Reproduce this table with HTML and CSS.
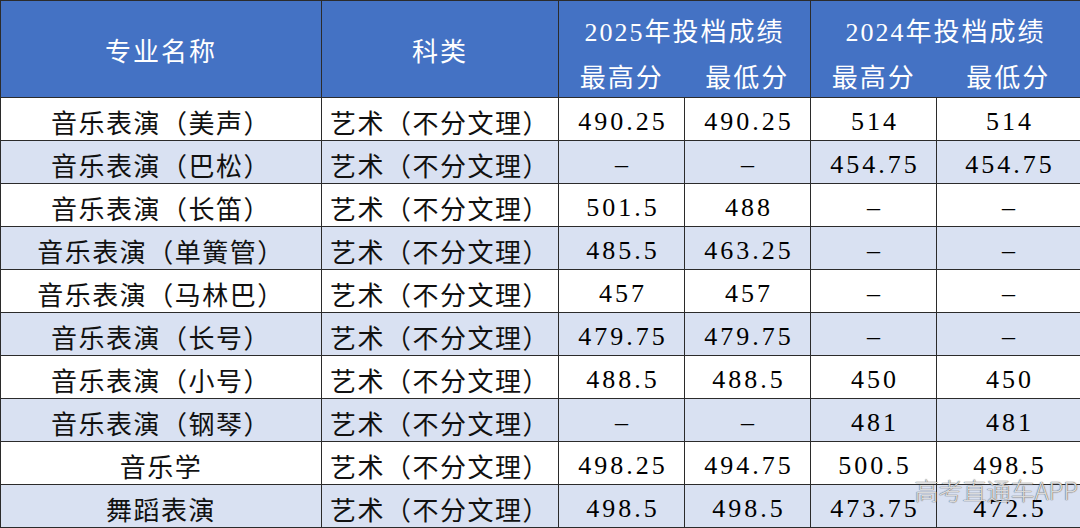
FILE: index.html
```html
<!DOCTYPE html>
<html lang="zh">
<head>
<meta charset="utf-8">
<link rel="stylesheet" href="styles.css">
</head>
<body>
<div class="wrap">
<table class="score">
  <colgroup>
    <col class="c-name"><col class="c-kind"><col class="c-num"><col class="c-num"><col class="c-num"><col class="c-last">
  </colgroup>
  <thead>
    <tr class="h1">
      <th rowspan="2">专业名称</th>
      <th rowspan="2">科类</th>
      <th colspan="2" class="grp">2025年投档成绩</th>
      <th colspan="2" class="grp">2024年投档成绩</th>
    </tr>
    <tr class="h2">
      <th class="sub">最高分</th>
      <th class="sub nol">最低分</th>
      <th class="sub">最高分</th>
      <th class="sub nol">最低分</th>
    </tr>
  </thead>
  <tbody>
    <tr><td>音乐表演（美声）</td><td>艺术（不分文理）</td><td class="n">490.25</td><td class="n">490.25</td><td class="n">514</td><td class="n">514</td></tr>
    <tr class="alt"><td>音乐表演（巴松）</td><td>艺术（不分文理）</td><td class="n">–</td><td class="n">–</td><td class="n">454.75</td><td class="n">454.75</td></tr>
    <tr><td>音乐表演（长笛）</td><td>艺术（不分文理）</td><td class="n">501.5</td><td class="n">488</td><td class="n">–</td><td class="n">–</td></tr>
    <tr class="alt"><td>音乐表演（单簧管）</td><td>艺术（不分文理）</td><td class="n">485.5</td><td class="n">463.25</td><td class="n">–</td><td class="n">–</td></tr>
    <tr><td>音乐表演（马林巴）</td><td>艺术（不分文理）</td><td class="n">457</td><td class="n">457</td><td class="n">–</td><td class="n">–</td></tr>
    <tr class="alt"><td>音乐表演（长号）</td><td>艺术（不分文理）</td><td class="n">479.75</td><td class="n">479.75</td><td class="n">–</td><td class="n">–</td></tr>
    <tr><td>音乐表演（小号）</td><td>艺术（不分文理）</td><td class="n">488.5</td><td class="n">488.5</td><td class="n">450</td><td class="n">450</td></tr>
    <tr class="alt"><td>音乐表演（钢琴）</td><td>艺术（不分文理）</td><td class="n">–</td><td class="n">–</td><td class="n">481</td><td class="n">481</td></tr>
    <tr><td>音乐学</td><td>艺术（不分文理）</td><td class="n">498.25</td><td class="n">494.75</td><td class="n">500.5</td><td class="n">498.5</td></tr>
    <tr class="alt"><td>舞蹈表演</td><td>艺术（不分文理）</td><td class="n">498.5</td><td class="n">498.5</td><td class="n">473.75</td><td class="n">472.5</td></tr>
  </tbody>
</table>
<div class="mark">高考直通车APP</div>
</div>
</body>
</html>
```

FILE: styles.css
```css
html, body {
  margin: 0;
  padding: 0;
  background: #ffffff;
}
.wrap {
  position: relative;
  width: 1080px;
  height: 528px;
  overflow: hidden;
}
.score {
  width: 1080px;
  border-collapse: collapse;
  table-layout: fixed;
  font-family: "Liberation Serif", "Noto Sans CJK SC", serif;
  font-size: 26px;
  color: #111;
}
.c-name { width: 321px; }
.c-kind { width: 237px; }
.c-num { width: 126px; }
.c-last { width: 144px; }
.score th, .score td {
  border: 1px solid #2b2b2b;
  text-align: center;
  padding: 0;
  white-space: nowrap;
  letter-spacing: 1.5px;
}
.score th {
  background: #4472c4;
  color: #ffffff;
  font-weight: normal;
  letter-spacing: 2px;
}
.h1 { height: 49px; }
.h2 { height: 48px; }
.h1 th.grp { border-bottom: none; padding-top: 8px; }
.h2 th.sub { border-top: none; border-right: none; padding-bottom: 0; padding-top: 4px; }
.h2 th.sub.nol { border-left: none; border-right: 1px solid #2b2b2b; }
.score tbody tr { height: 43px; }
.score td { padding-top: 5px; }
.score td.n { letter-spacing: 3px; padding-left: 3px; color: #000; }
.score tr.alt td { background: #d9e1f2; }
.mark {
  position: absolute;
  right: 2px;
  bottom: 26px;
  font-family: "Noto Sans CJK SC", "Liberation Sans", sans-serif;
  font-weight: 300;
  font-size: 24px;
  letter-spacing: 0;
  color: rgba(255, 255, 255, 0.8);
  text-shadow: 0 0 1px rgba(80, 80, 80, 0.9), 0 0 1px rgba(80, 80, 80, 0.9);
  line-height: 24px;
}
```
